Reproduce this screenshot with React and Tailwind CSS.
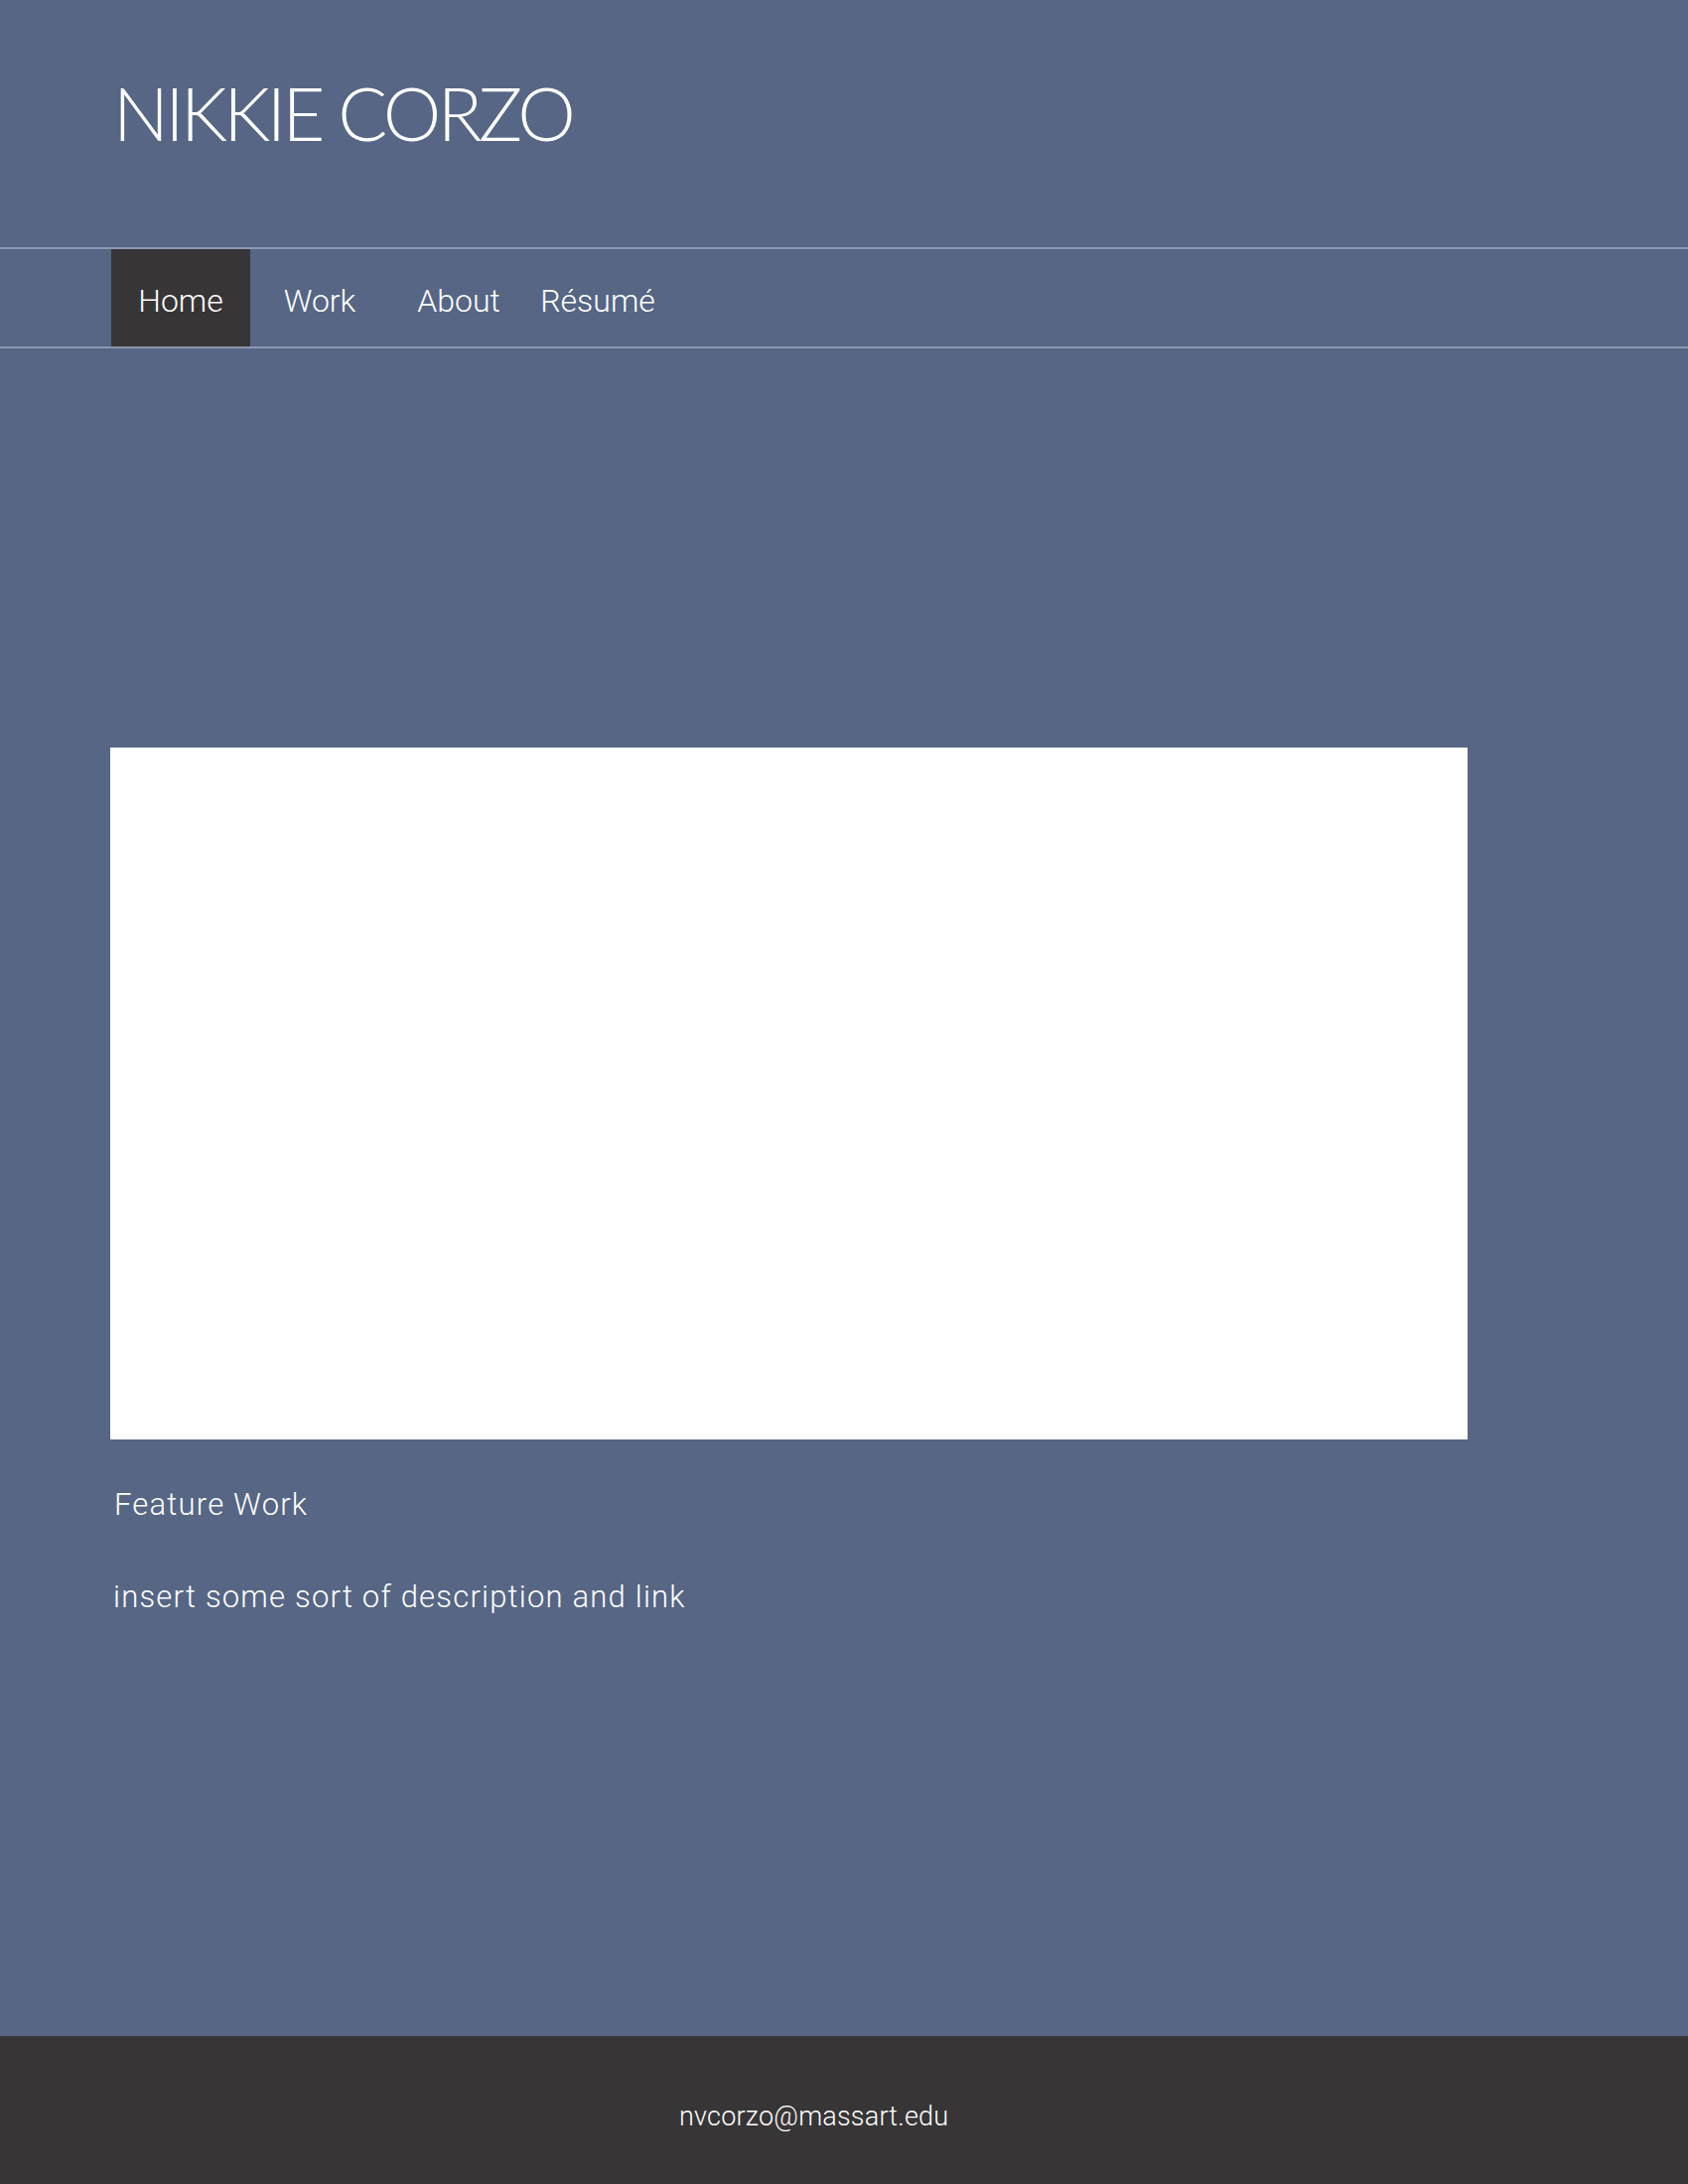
import React from "react";

export default function App() {
  const navItems = ["Home", "Work", "About", "Résumé"];
  return (
    <div className="min-h-[2200px] w-full flex flex-col bg-[#566684] text-white">
      <header className="h-[249px] pl-[114px] pt-[77px]">
        <h1
          className="text-[74px] leading-none font-light tracking-[-3.6px] text-white"
          style={{ fontFamily: "Lato, 'Liberation Sans', sans-serif" }}
        >
          NIKKIE CORZO
        </h1>
      </header>
      <nav className="h-[102px] border-y-2 border-[#8e98b2] pl-[112px] flex">
        {navItems.map((item, i) => (
          <div
            key={item}
            className={`w-[140px] h-full flex items-center justify-center pt-[5px] text-[32px] font-light ${
              i === 0 ? "bg-[#373536]" : ""
            }`}
            style={{ fontFamily: "Roboto, 'Liberation Sans', sans-serif" }}
          >
            {item}
          </div>
        ))}
      </nav>
      <main className="flex-1 pl-[111px] pt-[402px]">
        <div className="w-[1367px] h-[697px] bg-white" />
        <div
          className="pl-[4px] pt-[46px] font-light text-[31px] tracking-[1.2px]"
          style={{ fontFamily: "Roboto, 'Liberation Sans', sans-serif" }}
        >
          <p className="leading-[40px]">Feature Work</p>
          <p className="leading-[40px] mt-[53px] -ml-[1px]">insert some sort of description and link</p>
        </div>
      </main>
      <footer className="h-[149px] bg-[#373536] flex items-center">
        <p
          className="pl-[684px] text-[27px] font-light pt-[14px] tracking-[0.2px]"
          style={{ fontFamily: "Roboto, 'Liberation Sans', sans-serif" }}
        >
          nvcorzo@massart.edu
        </p>
      </footer>
    </div>
  );
}
